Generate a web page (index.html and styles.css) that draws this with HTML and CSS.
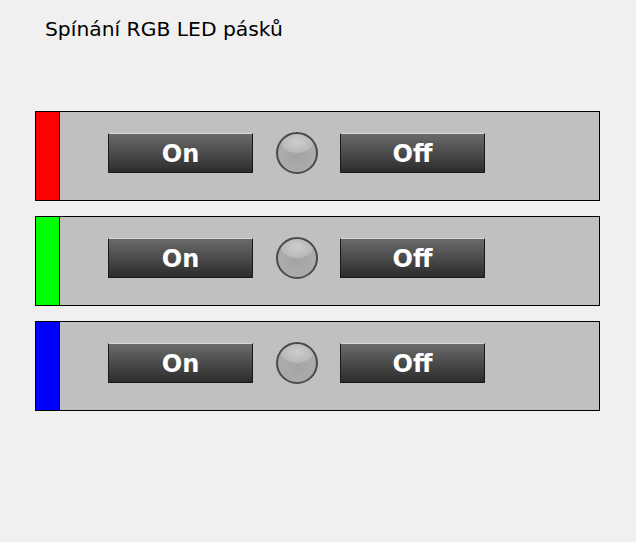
FILE: index.html
```html
<!DOCTYPE html>
<html>
<head>
<meta charset="utf-8">
<link rel="stylesheet" href="styles.css">
</head>
<body>
<div class="page">
  <h1 class="title">Spínání RGB LED pásků</h1>
  <div class="panels">
    <div class="panel">
      <div class="strip red"></div>
      <div class="controls">
        <button class="btn">On</button>
        <div class="led"></div>
        <button class="btn">Off</button>
      </div>
    </div>
    <div class="panel">
      <div class="strip green"></div>
      <div class="controls">
        <button class="btn">On</button>
        <div class="led"></div>
        <button class="btn">Off</button>
      </div>
    </div>
    <div class="panel">
      <div class="strip blue"></div>
      <div class="controls">
        <button class="btn">On</button>
        <div class="led"></div>
        <button class="btn">Off</button>
      </div>
    </div>
  </div>
</div>
</body>
</html>
```
FILE: styles.css
```css
html, body {
  margin: 0;
  padding: 0;
  background: #f0f0f0;
}
.page {
  padding: 0 36px 0 35px;
  font-family: "DejaVu Sans", Verdana, sans-serif;
}
.title {
  margin: 0;
  padding: 16px 0 0 10px;
  height: 111px;
  box-sizing: border-box;
  font-size: 20.3px;
  font-weight: normal;
  line-height: 26px;
  color: #000;
}
.panels {
  display: flex;
  flex-direction: column;
  gap: 15px;
}
.panel {
  display: flex;
  height: 90px;
  box-sizing: border-box;
  border: 1px solid #000;
  background: #c0c0c0;
}
.strip {
  width: 23px;
  border-right: 1px solid #000;
}
.red { background: #ff0000; }
.green { background: #00ff00; }
.blue { background: #0000ff; }
.controls {
  display: flex;
  align-items: center;
  padding: 0 0 6px 48px;
}
.btn {
  width: 145px;
  height: 40px;
  margin: 0;
  padding: 2px 0 0;
  border: 1px solid #1a1a1a;
  border-top-color: #d8d8d8;
  background: linear-gradient(#6a6a6a, #2c2c2c);
  color: #fff;
  font-family: "DejaVu Sans", Verdana, sans-serif;
  font-weight: bold;
  font-size: 24px;
  line-height: 36px;
}
.led {
  margin: 0 22px 0 23px;
  width: 42px;
  height: 42px;
  box-sizing: border-box;
  border-radius: 50%;
  border: 2px solid #4a4a4a;
  background: radial-gradient(ellipse 70% 45% at 50% 22%, #cdcdcd 0%, #b8b8b8 60%, transparent 62%), radial-gradient(circle at 50% 60%, #a4a4a4 0%, #acacac 60%, #8e8e8e 100%);
}
```
